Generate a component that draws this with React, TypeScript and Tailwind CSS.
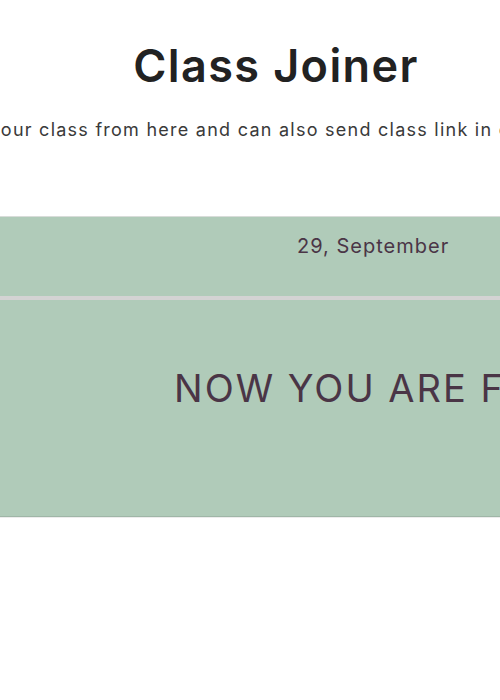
export default function App() {
  return (
    <div className="w-[500px] h-[700px] overflow-hidden bg-white font-['Inter',sans-serif]">
      <div className="w-[552px]">
        {/* Header */}
        <div className="pt-[38px] flex justify-center">
          <h1 className="text-[45px] leading-[56px] font-semibold text-[#222222] tracking-[1.4px]">
            Class Joiner
          </h1>
        </div>
        <div className="mt-[24px] flex justify-center">
          <p className="whitespace-nowrap text-[18px] leading-[24px] text-[#3a3a3a] tracking-[1.25px]">
            Join your class from here and can also send class link in chat group.
          </p>
        </div>

        {/* Class board */}
        <div className="mt-[74px] w-[640px] bg-[#b0cbb9] border-t border-[#d8dcd9] border-b border-b-[#9fb6a7] shadow-[0_1px_0_#ececec]">
          <div className="h-[79px] pl-[297px] pt-[16px]">
            <span className="text-[20px] leading-[26px] text-[#4a3546] tracking-[1px]">29, September</span>
          </div>
          <div className="h-[4px] bg-[#d3d3d3]" />
          <div className="h-[216px] pl-[174px] pt-[66px]">
            <span className="whitespace-nowrap text-[38px] leading-[44px] text-[#4a3546] tracking-[2px]">
              NOW YOU ARE FREE
            </span>
          </div>
        </div>
      </div>
    </div>
  );
}
